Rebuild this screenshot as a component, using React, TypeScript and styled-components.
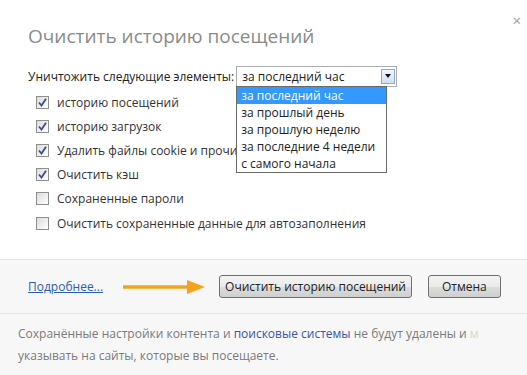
import * as React from "react";
import styled, { createGlobalStyle } from "styled-components";

const GlobalStyle = createGlobalStyle`
  html, body {
    margin: 0;
    padding: 0;
    background: #ffffff;
  }
  body {
    font-family: "Open Sans", "Noto Sans", "Liberation Sans", sans-serif;
    color: #222;
  }
`;

const Dialog = styled.div`
  width: 527px;
  height: 375px;
  overflow: hidden;
  display: flex;
  flex-direction: column;
  background: #fff;
`;

const Header = styled.div`
  display: flex;
  justify-content: space-between;
  align-items: flex-start;
  padding: 0 6px 0 28px;
  height: 62px;
`;

const Title = styled.h1`
  margin: 23px 0 0;
  font-size: 19px;
  font-weight: 400;
  color: #8a8a8a;
  line-height: 26px;
`;

const Close = styled.span`
  margin-top: 12px;
  font-size: 15px;
  color: #9a9a9a;
  line-height: 16px;
`;

const Body = styled.div`
  height: 197px;
  padding: 4px 0 0 28px;
  box-sizing: border-box;
`;

const SelectRow = styled.div`
  display: flex;
  align-items: center;
  gap: 2px;
  height: 20px;
  font-size: 12px;
`;

const SelectWrap = styled.div`
  position: relative;
  width: 161px;
`;

const SelectBox = styled.div`
  box-sizing: border-box;
  height: 21px;
  border: 1px solid #abadb3;
  display: flex;
  align-items: center;
  justify-content: space-between;
  padding: 0 1px 0 5px;
  font-size: 12px;
  background: #fff;
`;

const ArrowBtn = styled.div`
  width: 14px;
  height: 15px;
  box-sizing: border-box;
  border: 1px solid #8fa7c8;
  background: linear-gradient(#f0f6fd, #cfe0f4);
  display: flex;
  align-items: center;
  justify-content: center;
`;

const Triangle = styled.div`
  width: 0;
  height: 0;
  border-left: 3.5px solid transparent;
  border-right: 3.5px solid transparent;
  border-top: 4px solid #111;
`;

const DropList = styled.ul`
  position: absolute;
  top: 20px;
  left: 0;
  width: 151px;
  box-sizing: border-box;
  margin: 0;
  padding: 0;
  list-style: none;
  border: 1px solid #6a6a6a;
  background: #fff;
  z-index: 2;
`;

const DropItem = styled.li<{ $active?: boolean }>`
  height: 17px;
  line-height: 17px;
  padding-left: 4px;
  font-size: 12px;
  color: ${(p) => (p.$active ? "#fff" : "#222")};
  background: ${(p) => (p.$active ? "#3399ff" : "transparent")};
`;

const Checks = styled.div`
  display: flex;
  flex-direction: column;
  padding: 4px 0 0 8px;
`;

const CheckRow = styled.label`
  display: flex;
  align-items: center;
  gap: 8px;
  height: 24.2px;
  font-size: 12px;
  color: #333;
  white-space: nowrap;
`;

const Box = styled.span`
  width: 13px;
  height: 13px;
  box-sizing: border-box;
  border: 1px solid #8e8f8f;
  background: linear-gradient(135deg, #dcdcdc, #ffffff);
  display: flex;
  align-items: center;
  justify-content: center;
`;

const Footer = styled.div`
  height: 53px;
  flex: none;
  border-top: 1px solid #e3e3e3;
  border-bottom: 1px solid #e3e3e3;
  background: #f7f7f7;
  display: flex;
  align-items: center;
  padding: 0 28px;
`;

const MoreLink = styled.a`
  font-size: 12px;
  color: #2a5db0;
  text-decoration: underline;
  white-space: nowrap;
`;

const OrangeArrow = styled.svg`
  flex: none;
  margin-left: 20px;
  margin-right: 14px;
`;

const Button = styled.button<{ $pad: number }>`
  flex: none;
  font-family: inherit;
  font-size: 12px;
  color: #222;
  height: 23px;
  padding: 0 ${(p) => p.$pad}px;
  white-space: nowrap;
  border: 1px solid #707070;
  border-radius: 3px;
  background: linear-gradient(#f3f3f3, #ebebeb 50%, #dddddd 51%, #cfcfcf);
  margin-right: 16px;
`;

const Note = styled.p`
  margin: 0;
  padding: 9px 0 0 18px;
  font-size: 12px;
  line-height: 22px;
  color: #7a7a7a;
  background: #f7f7f7;
  flex: 1;
  white-space: nowrap;
  overflow: hidden;
`;

const NoteLink = styled.span`
  color: #3a55a8;
`;

const Fade = styled.span`
  color: #d6d6d6;
`;

const Check: React.FC<{ on: boolean }> = ({ on }) => (
  <Box>
    {on && (
      <svg width="9" height="9" viewBox="0 0 9 9">
        <path d="M1 4.5 L3.5 7.5 L8 0.8" fill="none" stroke="#3b4a96" strokeWidth="1.8" />
      </svg>
    )}
  </Box>
);

const items = [
  { label: "историю посещений", on: true },
  { label: "историю загрузок", on: true },
  { label: "Удалить файлы cookie и прочи", on: true },
  { label: "Очистить кэш", on: true },
  { label: "Сохраненные пароли", on: false },
  { label: "Очистить сохраненные данные для автозаполнения", on: false },
];

const options = [
  "за последний час",
  "за прошлый день",
  "за прошлую неделю",
  "за последние 4 недели",
  "с самого начала",
];

export default function App() {
  return (
    <Dialog>
      <GlobalStyle />
      <Header>
        <Title>Очистить историю посещений</Title>
        <Close>×</Close>
      </Header>
      <Body>
        <SelectRow>
          <span>Уничтожить следующие элементы:</span>
          <SelectWrap>
            <SelectBox>
              <span>за последний час</span>
              <ArrowBtn>
                <Triangle />
              </ArrowBtn>
            </SelectBox>
            <DropList>
              {options.map((o, i) => (
                <DropItem key={o} $active={i === 0}>
                  {o}
                </DropItem>
              ))}
            </DropList>
          </SelectWrap>
        </SelectRow>
        <Checks>
          {items.map((it) => (
            <CheckRow key={it.label}>
              <Check on={it.on} />
              {it.label}
            </CheckRow>
          ))}
        </Checks>
      </Body>
      <Footer>
        <MoreLink>Подробнее...</MoreLink>
        <OrangeArrow width="82" height="16" viewBox="0 0 82 16">
          <path d="M0 8 H68" stroke="#f5a31e" strokeWidth="3.5" />
          <path d="M64 1 L82 8 L64 15 Z" fill="#f5a31e" />
        </OrangeArrow>
        <Button $pad={5}>Очистить историю посещений</Button>
        <Button $pad={13}>Отмена</Button>
      </Footer>
      <Note>
        Сохранённые настройки контента и <NoteLink>поисковые системы</NoteLink> не будут удалены и <Fade>м</Fade>
        <br />
        указывать на сайты, которые вы посещаете.
      </Note>
    </Dialog>
  );
}
